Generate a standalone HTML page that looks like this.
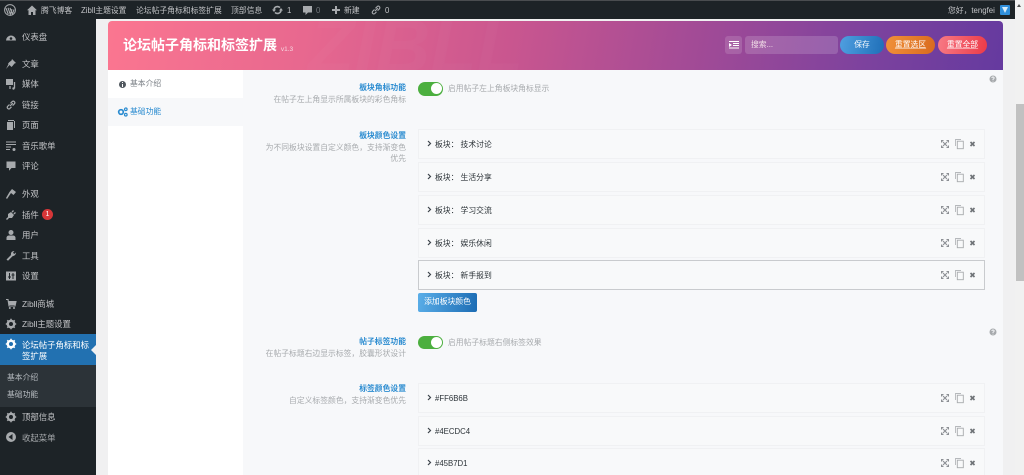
<!DOCTYPE html>
<html lang="zh"><head><meta charset="utf-8">
<style>
*{box-sizing:border-box}
html,body{margin:0;padding:0;width:1024px;height:475px;overflow:hidden;background:#f0f0f1;font-family:"Liberation Sans","Noto Sans CJK SC",sans-serif}
#wrap{position:absolute;left:0;top:0;width:1024px;height:475px;overflow:hidden;filter:blur(.3px)}
.a{position:absolute;white-space:nowrap}
#bar{position:absolute;left:0;top:0;width:1015px;height:19px;background:#1d2327;border-top:1px solid #4a4d50}
.b{position:absolute;top:4px;font-size:7.8px;line-height:11px;color:#c3c4c7;white-space:nowrap}
#side{position:absolute;left:0;top:19px;width:96px;height:456px;background:#1d2327}
.m{position:absolute;left:22px;font-size:8.4px;line-height:12px;color:#c3c4c7;white-space:nowrap}
.i{position:absolute;left:5px;width:12px;height:12px}
.lab{position:absolute;right:618px;text-align:right;white-space:nowrap;font-size:7.8px;font-weight:bold;color:#2a8bd0;line-height:11px}
.des{position:absolute;right:618px;text-align:right;white-space:nowrap;font-size:7.8px;color:#a7aaad;line-height:13px}
.row{position:absolute;left:418px;width:567px;height:30px;background:#f8f9fa;border:1px solid #f0f1f3}
.row .t{position:absolute;left:16px;top:9px;font-size:7.8px;line-height:12px;color:#2c3338;white-space:pre}
.row svg.ch{position:absolute;left:8px;top:10px}
.row svg.ac{position:absolute;left:522px;top:8px}
.sw{position:absolute;left:418px;width:25px;height:13.5px;border-radius:7px;background:#4caf3f}
.sw:after{content:"";position:absolute;right:1.5px;top:1.25px;width:11px;height:11px;border-radius:50%;background:#fff}
.pill{position:absolute;top:15px;height:18px;border-radius:9px;color:#fff;font-size:7.8px;line-height:18px;text-align:center}
</style></head><body><div id="wrap">

<div id="bar">
<svg class="a" style="left:4px;top:3px" width="12" height="12" viewBox="0 0 12 12"><circle cx="6" cy="6" r="5.4" fill="none" stroke="#a7aaad" stroke-width="1"/><path d="M2 4.2 4.2 10M4 3.8 6.3 10.3 8 5.2M6 3.9 8.4 10 10 5.5" fill="none" stroke="#a7aaad" stroke-width="1.1"/></svg>
<svg class="a" style="left:26px;top:3px" width="12" height="12" viewBox="0 0 12 12"><path d="M6 1.5 11 6.3H9.5V11H7V8H5V11H2.5V6.3H1Z" fill="#a7aaad"/></svg>
<span class="b" style="left:41px">腾飞博客</span>
<span class="b" style="left:81px">Zibll主题设置</span>
<span class="b" style="left:136px">论坛帖子角标和标签扩展</span>
<span class="b" style="left:231px">顶部信息</span>
<svg class="a" style="left:272px;top:4px" width="11" height="10" viewBox="0 0 11 10"><path d="M2 5a3.5 3.5 0 0 1 6-2.4M9 5a3.5 3.5 0 0 1-6 2.4" fill="none" stroke="#a7aaad" stroke-width="1.6"/><path d="M0 4.5H4L2 7ZM11 5.5H7L9 3Z" fill="#a7aaad"/></svg>
<span class="b" style="left:287px">1</span>
<svg class="a" style="left:302px;top:4px" width="11" height="11" viewBox="0 0 11 11"><path d="M1 1H10V7.5H6L3.5 10V7.5H1Z" fill="#a7aaad"/></svg>
<span class="b" style="left:316px;color:#72777c">0</span>
<svg class="a" style="left:331px;top:4px" width="10" height="10" viewBox="0 0 10 10"><path d="M4 1H6V4H9V6H6V9H4V6H1V4H4Z" fill="#a7aaad"/></svg>
<span class="b" style="left:344px">新建</span>
<svg class="a" style="left:370px;top:3px" width="12" height="12" viewBox="0 0 12 12"><path d="M5 7 7.8 4.2M4.5 5.5 2.5 7.5a1.6 1.6 0 0 0 2.2 2.2L6.5 7.8M5.5 4.3 7.4 2.4a1.6 1.6 0 0 1 2.2 2.2L7.6 6.6" fill="none" stroke="#a7aaad" stroke-width="1.1"/></svg>
<span class="b" style="left:385px">0</span>
<span class="b" style="left:948px">您好，tengfei</span>
<div class="a" style="left:1000px;top:4px;width:10px;height:10px;background:#2f8fdc;border-radius:1px"><div class="a" style="left:2px;top:2px;width:6px;height:6px;background:#d6ecfa;clip-path:polygon(0 0,100% 0,50% 100%)"></div></div>
</div>

<div id="side">
<svg class="i" style="top:12px" viewBox="0 0 12 12"><path d="M1 9.5A5 5 0 1 1 11 9.5Z" fill="#a7aaad"/><circle cx="6" cy="7.5" r="1.3" fill="#1d2327"/></svg><span class="m" style="top:12px">仪表盘</span>
<svg class="i" style="top:39px" viewBox="0 0 12 12"><path d="M7 1 11 5 9.5 5.5 7.5 8 6.5 9 4.5 7 1 11 3.5 6 3 5.5 4.5 4 6.5 2.5Z" fill="#a7aaad"/></svg><span class="m" style="top:39px">文章</span>
<svg class="i" style="top:59px" viewBox="0 0 12 12"><rect x="1" y="1" width="7" height="6" fill="#a7aaad"/><path d="M9.5 4V10.5M5 8V11" stroke="#a7aaad" stroke-width="1.3"/><circle cx="8.5" cy="10.5" r="1.2" fill="#a7aaad"/></svg><span class="m" style="top:59px">媒体</span>
<svg class="i" style="top:80px" viewBox="0 0 12 12"><path d="M5 7 7.8 4.2M4.5 5.5 2.5 7.5a1.6 1.6 0 0 0 2.2 2.2L6.5 7.8M5.5 4.3 7.4 2.4a1.6 1.6 0 0 1 2.2 2.2L7.6 6.6" fill="none" stroke="#a7aaad" stroke-width="1.2"/></svg><span class="m" style="top:80px">链接</span>
<svg class="i" style="top:100px" viewBox="0 0 12 12"><path d="M3 2H10V9H9V1H3Z M2 3H8V11H2Z" fill="#a7aaad"/></svg><span class="m" style="top:100px">页面</span>
<svg class="i" style="top:121px" viewBox="0 0 12 12"><path d="M1 2H11M1 4.5H11M1 7H6M1 9.500H5" stroke="#a7aaad" stroke-width="1"/><circle cx="9" cy="9.500" r="1.500" fill="#a7aaad"/></svg><span class="m" style="top:121px">音乐歌单</span>
<svg class="i" style="top:141px" viewBox="0 0 12 12"><path d="M1.500 1.500H10.500V8H6.500L4 10.800V8H1.500Z" fill="#a7aaad"/></svg><span class="m" style="top:141px">评论</span>
<svg class="i" style="top:169px" viewBox="0 0 12 12"><path d="M7 1 11 4 8.500 7 6 5 2 11 1 10 4.500 4Z" fill="#a7aaad"/></svg><span class="m" style="top:169px">外观</span>
<svg class="i" style="top:190px" viewBox="0 0 12 12"><path d="M6 3 9 6 7 9 4 9 2 11 1 10 3 8 3 5ZM8 1 9 2 7.500 3.500 6.500 3ZM11 4 10 3 8.500 4.500 9 5.500Z" fill="#a7aaad"/></svg><span class="m" style="top:190px">插件</span>
<div class="a" style="left:42px;top:190px;width:11px;height:11px;border-radius:50%;background:#d63638;color:#fff;font-size:7px;line-height:11px;text-align:center">1</div>
<svg class="i" style="top:210px" viewBox="0 0 12 12"><circle cx="6" cy="3.500" r="2.500" fill="#a7aaad"/><path d="M1.500 11V8.500Q2 6.500 4 6.500H8Q10 6.500 10.500 8.500V11Z" fill="#a7aaad"/></svg><span class="m" style="top:210px">用户</span>
<svg class="i" style="top:231px" viewBox="0 0 12 12"><path d="M1.500 9.500 6 5Q5.500 2 8 1.200L9.500 1 8 2.800 9.200 4 11 2.500Q11 5.500 7.500 6.200L3 10.800Z" fill="#a7aaad"/></svg><span class="m" style="top:231px">工具</span>
<svg class="i" style="top:251px" viewBox="0 0 12 12"><rect x="1" y="1.500" width="10" height="9" fill="#a7aaad"/><path d="M4.500 3V9M8 3V9M3 7H6M6.500 5H9.500" stroke="#1d2327" stroke-width="1"/></svg><span class="m" style="top:251px">设置</span>
<svg class="i" style="top:279px" viewBox="0 0 12 12"><path d="M1 1.500H3L4 8H10L11 3.500H3.500" fill="none" stroke="#a7aaad" stroke-width="1.100"/><path d="M3.500 3.500H11L10 7H4Z" fill="#a7aaad"/><circle cx="4.800" cy="10" r="1" fill="#a7aaad"/><circle cx="9" cy="10" r="1" fill="#a7aaad"/></svg><span class="m" style="top:279px">Zibll商城</span>
<svg class="i" style="top:299px" viewBox="0 0 12 12"><circle cx="6" cy="6" r="3.300" fill="none" stroke="#a7aaad" stroke-width="2.200"/><path d="M6 .8V11.200M.8 6H11.200M2.300 2.300 9.700 9.700M9.700 2.300 2.300 9.700" stroke="#a7aaad" stroke-width="1.500"/><circle cx="6" cy="6" r="2" fill="#1d2327"/></svg><span class="m" style="top:299px">Zibll主题设置</span>

<div class="a" style="left:0;top:315px;width:96px;height:31px;background:#2271b1"></div>
<svg class="i" style="top:319px" viewBox="0 0 12 12"><circle cx="6" cy="6" r="3.300" fill="none" stroke="#fff" stroke-width="2.200"/><path d="M6 .8V11.200M.8 6H11.200M2.300 2.300 9.700 9.700M9.700 2.300 2.300 9.700" stroke="#fff" stroke-width="1.500"/><circle cx="6" cy="6" r="2" fill="#2271b1"/></svg>
<span class="m" style="top:320px;color:#fff">论坛帖子角标和标</span><span class="m" style="top:331px;color:#fff">签扩展</span>
<div class="a" style="left:91px;top:326px;width:0;height:0;border:5px solid transparent;border-left:0;border-right:5px solid #f0f0f1"></div>
<div class="a" style="left:0;top:346px;width:96px;height:42px;background:#2c3338"></div>
<span class="m" style="left:7px;top:353px;font-size:7.8px;color:#b4b9be">基本介绍</span>
<span class="m" style="left:7px;top:370px;font-size:7.8px;color:#b4b9be">基础功能</span>
<svg class="i" style="top:392px" viewBox="0 0 12 12"><circle cx="6" cy="6" r="3.300" fill="none" stroke="#a7aaad" stroke-width="2.200"/><path d="M6 .8V11.200M.8 6H11.200M2.300 2.300 9.700 9.700M9.700 2.300 2.300 9.700" stroke="#a7aaad" stroke-width="1.500"/><circle cx="6" cy="6" r="2" fill="#1d2327"/></svg><span class="m" style="top:392px">顶部信息</span>
<svg class="i" style="top:412px" viewBox="0 0 12 12"><circle cx="6" cy="6" r="5" fill="#a7aaad"/><path d="M7.500 3V9L3.500 6Z" fill="#1d2327"/></svg><span class="m" style="top:413px;color:#a7aaad">收起菜单</span>
</div>

<div class="a" style="left:108px;top:70px;width:135px;height:405px;background:#fff"></div>
<div class="a" style="left:243px;top:70px;width:760px;height:405px;background:#f7f8fa"></div>

<div class="a" style="left:108px;top:21px;width:895px;height:49px;border-radius:4px 4px 0 0;background:linear-gradient(100deg,#fb7690 0%,#e8688f 22%,#c9568f 45%,#a34b96 65%,#7c429e 85%,#653a9f 100%);overflow:hidden">
<div class="a" style="left:200px;top:-14px;font-size:76px;line-height:80px;font-weight:bold;font-style:italic;color:rgba(255,255,255,.018)">ZIBLL</div>
<div class="a" style="left:15px;top:14px;font-size:14px;font-weight:bold;color:#fff;line-height:20px">论坛帖子角标和标签扩展 <span style="font-size:6.5px;font-weight:normal;color:#f6d6e0;vertical-align:-1px">v1.3</span></div>
<div class="a" style="left:617px;top:15px;width:17px;height:18px;border-radius:3px;background:rgba(255,255,255,.14)"></div>
<svg class="a" style="left:621px;top:20px" width="10" height="8" viewBox="0 0 10 8"><path d="M0 .5H10M4 2.500H10M4 4.500H10M0 7H10" stroke="#fff" stroke-width="1.100"/><path d="M0 2 3 4 0 6Z" fill="#fff"/></svg>
<div class="a" style="left:637px;top:15px;width:93px;height:18px;border-radius:3px;background:rgba(255,255,255,.16);color:#f0dbe6;font-size:7.800px;line-height:18px;padding-left:6px">搜索...</div>
<div class="pill" style="left:732px;width:44px;background:linear-gradient(100deg,#4f9fe0,#1f6fb8)">保存</div>
<div class="pill" style="left:778px;width:49px;background:linear-gradient(100deg,#f0913a,#d96a1e);text-decoration:underline;text-decoration-color:rgba(255,255,255,.45)">重置选区</div>
<div class="pill" style="left:830px;width:49px;background:linear-gradient(100deg,#f77a85,#ec3a48);text-decoration:underline;text-decoration-color:rgba(255,255,255,.45)">重置全部</div>
</div>

<svg class="a" style="left:118px;top:80px" width="9" height="9" viewBox="0 0 9 9"><circle cx="4.500" cy="4.500" r="3.500" fill="#50575e"/><path d="M4.500 2V3M4.500 4V7" stroke="#fff" stroke-width="1"/></svg>
<span class="a" style="left:130px;top:78px;font-size:7.8px;line-height:12px;color:#7a7f85">基本介绍</span>
<div class="a" style="left:108px;top:98px;width:135px;height:28px;background:#f7f8fa"></div>
<svg class="a" style="left:117px;top:107px" width="11" height="10" viewBox="0 0 11 10"><circle cx="4" cy="5" r="2.300" fill="none" stroke="#2a8bd0" stroke-width="1.700"/><circle cx="8.800" cy="2.300" r="1.300" fill="none" stroke="#2a8bd0" stroke-width="1.200"/><circle cx="8.800" cy="7.700" r="1.300" fill="none" stroke="#2a8bd0" stroke-width="1.200"/></svg>
<span class="a" style="left:130px;top:106px;font-size:7.8px;line-height:12px;color:#2a8bd0">基础功能</span>

<span class="lab" style="top:82px">板块角标功能</span>
<span class="des" style="top:93px">在帖子左上角显示所属板块的彩色角标</span>
<div class="sw" style="top:82px"></div>
<span class="a" style="left:448px;top:83px;font-size:7.8px;line-height:11px;color:#a7aaad">启用帖子左上角板块角标显示</span>
<span class="lab" style="top:130px">板块颜色设置</span>
<span class="des" style="top:141px">为不同板块设置自定义颜色，支持渐变色</span>
<span class="des" style="top:152px">优先</span>

<svg width="0" height="0" style="position:absolute"><defs>
<symbol id="ch" viewBox="0 0 5 7"><path d="M1 1 3.500 3.500 1 6" fill="none" stroke="#3c434a" stroke-width="1.200"/></symbol>
<symbol id="ac" viewBox="0 0 35 12"><path d="M2 4 6 8M6 4 2 8" stroke="#8c8f94" stroke-width="1.100"/><path d="M0 2H3L0 5ZM8 2H5L8 5ZM0 10H3L0 7ZM8 10H5L8 7Z" fill="#8c8f94"/><path d="M14.500 8V1.500H20" fill="none" stroke="#b5b8bb" stroke-width=".9"/><rect x="16.300" y="3.200" width="6" height="7.500" fill="none" stroke="#a7aaad" stroke-width=".9"/><path d="M29.500 4 33.500 8M33.500 4 29.500 8" stroke="#6f7377" stroke-width="1.700"/></symbol>
</defs></svg>

<div class="row" style="top:129px"><svg class="ch" width="5" height="7"><use href="#ch"/></svg><span class="t">板块： 技术讨论</span><svg class="ac" width="35" height="12"><use href="#ac"/></svg></div>
<div class="row" style="top:162px"><svg class="ch" width="5" height="7"><use href="#ch"/></svg><span class="t">板块： 生活分享</span><svg class="ac" width="35" height="12"><use href="#ac"/></svg></div>
<div class="row" style="top:195px"><svg class="ch" width="5" height="7"><use href="#ch"/></svg><span class="t">板块： 学习交流</span><svg class="ac" width="35" height="12"><use href="#ac"/></svg></div>
<div class="row" style="top:228px"><svg class="ch" width="5" height="7"><use href="#ch"/></svg><span class="t">板块： 娱乐休闲</span><svg class="ac" width="35" height="12"><use href="#ac"/></svg></div>
<div class="row" style="top:260px;border-color:#c9cbce"><svg class="ch" width="5" height="7"><use href="#ch"/></svg><span class="t">板块： 新手报到</span><svg class="ac" width="35" height="12"><use href="#ac"/></svg></div>

<div class="a" style="left:418px;top:293px;width:59px;height:19px;border-radius:2px;background:linear-gradient(100deg,#5aaee8,#1c6cb4);color:#fff;font-size:7.8px;line-height:18px;text-align:center">添加板块颜色</div>

<span class="lab" style="top:336px">帖子标签功能</span>
<span class="des" style="top:347px">在帖子标题右边显示标签，胶囊形状设计</span>
<div class="sw" style="top:335.500px"></div>
<span class="a" style="left:448px;top:337px;font-size:7.8px;line-height:11px;color:#a7aaad">启用帖子标题右侧标签效果</span>
<span class="lab" style="top:383px">标签颜色设置</span>
<span class="des" style="top:394px">自定义标签颜色，支持渐变色优先</span>

<div class="row" style="top:383px"><svg class="ch" width="5" height="7"><use href="#ch"/></svg><span class="t">#FF6B6B</span><svg class="ac" width="35" height="12"><use href="#ac"/></svg></div>
<div class="row" style="top:416px"><svg class="ch" width="5" height="7"><use href="#ch"/></svg><span class="t">#4ECDC4</span><svg class="ac" width="35" height="12"><use href="#ac"/></svg></div>
<div class="row" style="top:448px;height:27px;border-bottom:0"><svg class="ch" width="5" height="7"><use href="#ch"/></svg><span class="t">#45B7D1</span><svg class="ac" width="35" height="12"><use href="#ac"/></svg></div>

<svg class="a" style="left:989px;top:75px" width="8" height="8" viewBox="0 0 8 8"><circle cx="4" cy="4" r="3.500" fill="#a7aaad"/><path d="M2.800 3Q3 2 4 2T5.200 3Q5.200 3.700 4 4.300V5M4 5.700V6.500" fill="none" stroke="#f7f8fa" stroke-width=".9"/></svg>
<svg class="a" style="left:989px;top:328px" width="8" height="8" viewBox="0 0 8 8"><circle cx="4" cy="4" r="3.500" fill="#a7aaad"/><path d="M2.800 3Q3 2 4 2T5.200 3Q5.200 3.700 4 4.300V5M4 5.700V6.500" fill="none" stroke="#f7f8fa" stroke-width=".9"/></svg>

<div class="a" style="left:1015px;top:0;width:9px;height:475px;background:#f1f1f1"></div>
<div class="a" style="left:1016px;top:104px;width:8px;height:177px;background:#c1c1c1"></div>
<div class="a" style="left:1017px;top:4px;width:0;height:0;border:2.500px solid transparent;border-top:0;border-bottom:3px solid #505050"></div>
</div></body></html>
